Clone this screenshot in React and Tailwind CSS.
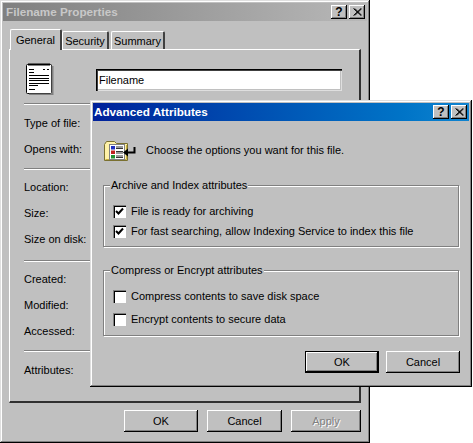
import React from "react";

// Win2000 bevels
const raised = "shadow-[inset_-1px_-1px_0_#000,inset_1px_1px_0_#fff,inset_-2px_-2px_0_#808080]";
const windowBevel = "shadow-[inset_-1px_-1px_0_#000,inset_1px_1px_0_#dfdfdf,inset_-2px_-2px_0_#808080,inset_2px_2px_0_#fff]";
const defaultBevel = "shadow-[inset_0_0_0_1px_#000,inset_-2px_-2px_0_#000,inset_2px_2px_0_#fff,inset_-3px_-3px_0_#808080]";

const CaptionButton = ({ children }) => (
  <div className={`w-[16px] h-[14px] bg-[#c0c0c0] flex items-center justify-center ${raised}`}>
    {children}
  </div>
);

const CaptionButtons = () => (
  <div className="flex gap-[2px] mr-[2px]">
    <CaptionButton>
      <span className="text-[12px] font-bold leading-none text-black">?</span>
    </CaptionButton>
    <CaptionButton>
      <svg width="9" height="8" viewBox="0 0 9 8">
        <path d="M0.5 0.5L8 7.5M1.8 0.5L8.8 7.5M8 0.5L0.5 7.5M8.8 0.5L1.8 7.5" stroke="#000" strokeWidth="1" fill="none" />
      </svg>
    </CaptionButton>
  </div>
);

const Button = ({ children, isDefault, disabled, className = "" }) => (
  <div
    className={`h-[22px] flex items-center justify-center bg-[#c0c0c0] ${isDefault ? defaultBevel : raised} ${
      disabled ? "text-[#808080] [text-shadow:1px_1px_0_#fff]" : "text-black"
    } ${className}`}
  >
    {children}
  </div>
);

const Etched = ({ className = "" }) => (
  <div className={`h-[2px] border-t border-[#808080] border-b-0 bg-white ${className}`} />
);

const InfoRow = ({ children }) => <div className="h-[26px] flex items-center">{children}</div>;

const NotepadIcon = () => (
  <svg width="28" height="33" viewBox="0 0 28 33" className="block ml-[2px]">
    <rect x="0.5" y="2.5" width="25" height="29" rx="1" fill="#fff" stroke="#000" />
    <path d="M26.5 4V32.5H3" stroke="#808080" strokeWidth="2" fill="none" />
    <path d="M3 1v3M5 1v3M7 1v3M9 1v3M11 1v3M13 1v3M15 1v3M17 1v3M19 1v3M21 1v3M23 1v3" stroke="#000" />
    <path d="M3 7.5H8M17 7.5H19M21 7.5H23M3 10.5H8M3 13.5H23M3 16.5H23M3 18.5H23M3 21.5H23M3 23.5H12M3 27.5H9" stroke="#000" />
  </svg>
);

const FolderIcon = () => (
  <svg width="33" height="24" viewBox="0 0 33 24" className="block">
    <path d="M1.5 6.5L3.5 3.5H11.5L13.5 5.5H24.5V22.5H1.5Z" fill="#fff2a8" stroke="#7a7030" />
    <path d="M2.5 21.5H23.5V7" stroke="#c8b040" fill="none" />
    <rect x="6.5" y="6.5" width="15" height="15" fill="#fff" stroke="#808080" />
    <rect x="8" y="8" width="4" height="3.5" fill="#2030c0" />
    <rect x="8" y="12.5" width="4" height="3.5" fill="#c02020" />
    <rect x="8" y="17" width="4" height="3.5" fill="#209030" />
    <path d="M13 9H20M13 10.5H20M13 13.5H20M13 15H20M13 18H20M13 19.5H20" stroke="#000" strokeWidth="0.8" />
    <path d="M31.5 9V14.5H23" stroke="#000" strokeWidth="2" fill="none" />
    <path d="M20 14.5L25 10.5V18.5Z" fill="#000" />
  </svg>
);

const Checkbox = ({ checked, label }) => (
  <div className="flex items-center gap-[5px] h-[13px]">
    <div className="w-[13px] h-[13px] bg-white flex items-center justify-center shadow-[inset_1px_1px_0_#808080,inset_2px_2px_0_#000,inset_-1px_-1px_0_#fff]">
      {checked && (
        <svg width="9" height="9" viewBox="0 0 9 9">
          <path d="M1 4L3.5 6.5L8 1.5" stroke="#000" strokeWidth="2" fill="none" />
        </svg>
      )}
    </div>
    <span>{label}</span>
  </div>
);

const GroupBox = ({ title, className = "", children }) => (
  <fieldset className={`border border-[#808080] shadow-[inset_1px_1px_0_#fff,1px_1px_0_#fff] ${className}`}>
    <legend className="ml-[6px] px-[1px] bg-[#c0c0c0] leading-[13px]">{title}</legend>
    {children}
  </fieldset>
);

const App = () => {
  return (
    <div
      className="relative w-[473px] h-[443px] overflow-hidden bg-white text-[11px] text-black"
      style={{ fontFamily: '"Liberation Sans", Arial, sans-serif' }}
    >
      {/* Filename Properties (back window) */}
      <div className={`w-[370px] h-[443px] bg-[#c0c0c0] p-[3px] ${windowBevel}`}>
        <div className="h-[18px] flex items-center justify-between bg-gradient-to-r from-[#808080] to-[#b8b8b8]">
          <span className="pl-[3px] text-[11.7px] font-bold text-[#c8c8c8]">Filename Properties</span>
          <CaptionButtons />
        </div>

        {/* Tabs */}
        <div className="mt-[8px] ml-[7px] h-[20px] flex items-end">
          <div className="relative z-10 w-[52px] h-[21px] -mb-[1px] pt-[1px] flex items-center justify-center bg-[#c0c0c0] border-t border-l border-white border-r-2 border-r-[#404040] rounded-t-[2px]">
            General
          </div>
          <div className="w-[47px] h-[18px] pt-[1px] flex items-center justify-center border-t border-l border-white border-r-2 border-r-[#404040] rounded-t-[2px]">
            Security
          </div>
          <div className="ml-[2px] w-[54px] h-[18px] pt-[1px] flex items-center justify-center border-t border-l border-white border-r-2 border-r-[#404040] rounded-t-[2px]">
            Summary
          </div>
        </div>

        {/* General tab panel */}
        <div className="ml-[6px] mr-[6px] h-[354px] border-t border-l border-white border-r-2 border-b-2 border-r-[#303030] border-b-[#303030] pl-[14px] pr-[16px]">
          <div className="pt-[12px] h-[53px] flex items-start">
            <NotepadIcon />
            <div className="ml-[42px] mt-[7px] w-[246px] h-[22px] bg-white flex items-center pl-[3px] shadow-[inset_1px_1px_0_#000,inset_2px_2px_0_#404040,inset_-1px_-1px_0_#dfdfdf,inset_-2px_-2px_0_#c0c0c0]">
              Filename
            </div>
          </div>
          <Etched />
          <div className="mt-[5px]">
            <InfoRow>Type of file:</InfoRow>
            <InfoRow>Opens with:</InfoRow>
          </div>
          <Etched className="mt-[6px]" />
          <div className="mt-[4px]">
            <InfoRow>Location:</InfoRow>
            <InfoRow>Size:</InfoRow>
            <InfoRow>Size on disk:</InfoRow>
          </div>
          <Etched className="mt-[8px]" />
          <div className="mt-[4px]">
            <InfoRow>Created:</InfoRow>
            <InfoRow>Modified:</InfoRow>
            <InfoRow>Accessed:</InfoRow>
          </div>
          <Etched className="mt-[6px]" />
          <div className="mt-[5px]">
            <InfoRow>Attributes:</InfoRow>
          </div>
        </div>

        {/* Bottom buttons */}
        <div className="mt-[7px] flex justify-end gap-[9px] pr-[6px]">
          <Button className="w-[74px]">OK</Button>
          <Button className="w-[75px]">Cancel</Button>
          <Button className="w-[70px]" disabled>Apply</Button>
        </div>
      </div>

      {/* Advanced Attributes (front dialog) */}
      <div className={`absolute left-[90px] top-[100px] w-[382px] h-[287px] bg-[#c0c0c0] p-[3px] ${windowBevel}`}>
        <div className="h-[18px] flex items-center justify-between bg-gradient-to-r from-[#00209a] to-[#1084d0]">
          <span className="pl-[1px] text-[11.7px] font-bold text-white">Advanced Attributes</span>
          <CaptionButtons />
        </div>

        <div className="mt-[17px] ml-[10px] flex items-center">
          <FolderIcon />
          <span className="ml-[10px]">Choose the options you want for this file.</span>
        </div>

        <GroupBox title="Archive and Index attributes" className="mt-[17px] mx-[10px] h-[68px]">
          <div className="flex flex-col gap-[7px] pt-[13px] pl-[9px]">
            <Checkbox checked label="File is ready for archiving" />
            <Checkbox checked label="For fast searching, allow Indexing Service to index this file" />
          </div>
        </GroupBox>

        <GroupBox title="Compress or Encrypt attributes" className="mt-[17px] mx-[10px] h-[72px]">
          <div className="flex flex-col gap-[10px] pt-[13px] pl-[9px]">
            <Checkbox label="Compress contents to save disk space" />
            <Checkbox label="Encrypt contents to secure data" />
          </div>
        </GroupBox>

        <div className="mt-[15px] flex justify-end gap-[7px] pr-[9px]">
          <Button isDefault className="w-[74px]">OK</Button>
          <Button className="w-[74px]">Cancel</Button>
        </div>
      </div>
    </div>
  );
};

export default App;
